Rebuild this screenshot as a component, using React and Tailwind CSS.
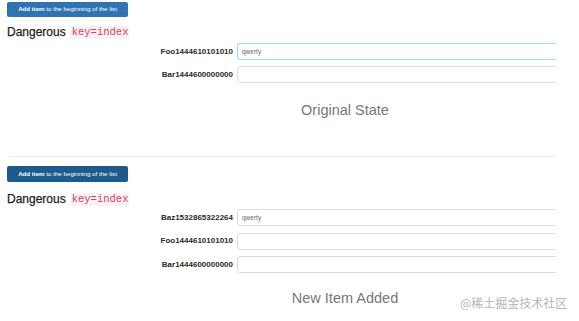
import React from 'react';

const Row = ({ label, value, focused }) => (
  <div className="flex items-center h-[17px]">
    <div className="w-[230px] pr-[4px] text-right text-[8px] font-bold text-[#2a2a2a] leading-none">{label}</div>
    <div className="w-[319px] overflow-hidden">
      <div
        className={
          'h-[17px] w-[330px] rounded-[3px] border bg-white pl-[4px] flex items-center text-[6.5px] text-[#666] ' +
          (focused ? 'border-[#9fdbe9] shadow-[0_0_2px_rgba(102,200,233,0.5)]' : 'border-[#dcdcdc]')
        }
      >
        {value}
      </div>
    </div>
  </div>
);

const Section = ({ dark, rows, caption, headGap, rowGap, listGap }) => (
  <div className="pl-[7px]">
    <button
      className={
        'w-[121px] rounded-[2px] text-white text-[6.2px] leading-none flex items-center justify-center ' +
        (dark ? 'h-[16px] bg-[#1d5b8f]' : 'h-[15px] bg-[#2f74b0]')
      }
    >
      <span className="font-bold">Add item</span>
      <span>&nbsp;to the beginning of the list</span>
    </button>
    <div className={'h-[14px] flex items-center ' + headGap}>
      <span className="text-[12px] text-[#1e1e1e] font-medium [-webkit-text-stroke:0.25px_#1e1e1e]">Dangerous</span>
      <code className="ml-[5px] px-[1px] font-['Liberation_Mono'] text-[10.5px] text-[#d63f6a] bg-[#fbf0f3] leading-[13px]">
        key=index
      </code>
    </div>
    <div className={'flex flex-col ' + listGap + ' ' + rowGap}>
      {rows.map((r) => (
        <Row key={r.label} {...r} />
      ))}
    </div>
    <div className="ml-[103px] w-[470px] text-center text-[14.5px] leading-[17px] text-[#777]">{caption}</div>
  </div>
);

export default function App() {
  return (
    <div className="relative w-[579px] h-[321px] bg-white overflow-hidden font-['Liberation_Sans',sans-serif]">
      <div className="pt-[2px]">
        <Section
          headGap="mt-[8px]"
          listGap="mt-[4px]"
          rowGap="gap-[6px]"
          rows={[
            { label: 'Foo1444610101010', value: 'qwerty', focused: true },
            { label: 'Bar1444600000000', value: '' },
          ]}
          caption={<div className="mt-[19px]">Original State</div>}
        />
      </div>
      <div className="mt-[37px] ml-[10px] w-[546px] border-t border-[#eeeeee]" />
      <div className="pt-[9px]">
        <Section
          dark
          headGap="mt-[10px]"
          listGap="mt-[3px]"
          rowGap="gap-[6.5px]"
          rows={[
            { label: 'Baz1532865322264', value: 'qwerty' },
            { label: 'Foo1444610101010', value: '' },
            { label: 'Bar1444600000000', value: '' },
          ]}
          caption={<div className="mt-[17px]">New Item Added</div>}
        />
      </div>
      <div className="absolute left-[460px] top-[294px] text-[12px] text-[#b5b5b5] font-['Noto_Sans_CJK_SC',sans-serif]">
        @稀土掘金技术社区
      </div>
    </div>
  );
}
